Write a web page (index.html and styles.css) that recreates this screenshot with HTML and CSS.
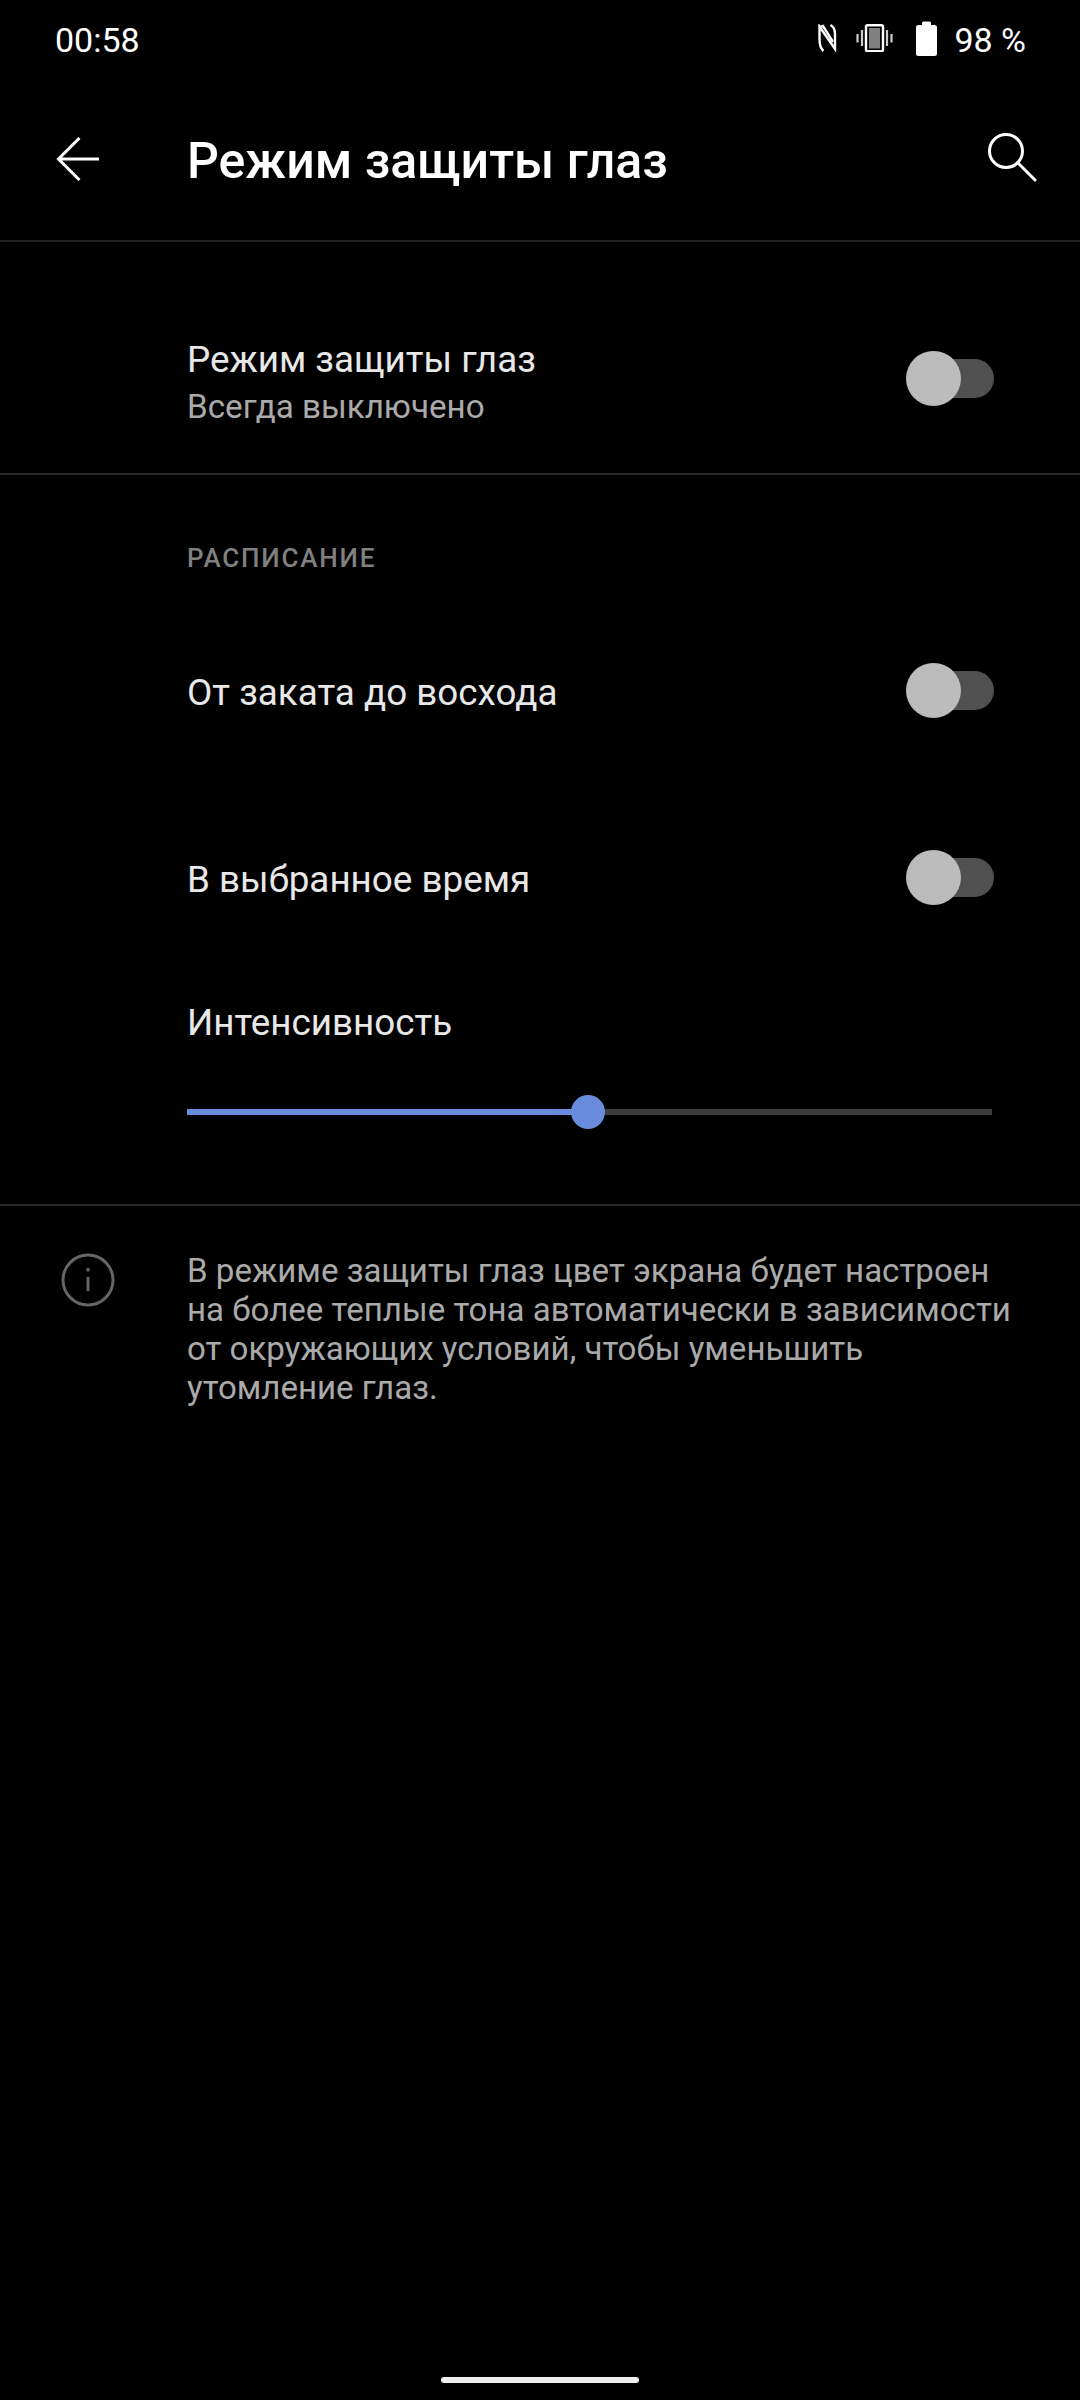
FILE: index.html
```html
<!DOCTYPE html>
<html lang="ru">
<head>
  <meta charset="UTF-8" />
  <meta name="viewport" content="width=device-width, initial-scale=1" />
  <title>Режим защиты глаз</title>
  <link rel="stylesheet" href="styles.css">
</head>
<body>
  <div class="screen">
    <div class="status-bar">
      <span class="time">00:58</span>
      <div class="status-icons">
        <svg class="icon-nfc" width="19" height="28" viewBox="0 0 19 28" fill="none" stroke="#fff" stroke-width="2.4">
          <path d="M5.500 27 C2 24 1.500 19 1.500 15 L1.500 2.500 L17 25 L17 10 C17 6 16 3 12.500 1"/>
          <path d="M2 3 L5 2 L15 18"/>
        </svg>
        <svg class="icon-vibrate" width="37" height="28" viewBox="0 0 37 28">
          <rect x="10" y="1.200" width="17" height="26" rx="1.500" fill="#000" stroke="#fff" stroke-width="2.400"/>
          <rect x="13" y="4" width="11" height="20.500" fill="#808080"/>
          <path d="M1.500 10 V18.500 M6 6 V22 M31 6 V22 M35.500 10 V18.500" stroke="#ccc" stroke-width="2.200"/>
        </svg>
        <svg class="icon-battery" width="21" height="35" viewBox="0 0 21 35">
          <path d="M6 2 Q6 0.500 7.500 0.500 H13.500 Q15 0.500 15 2 V4 H18.500 Q21 4 21 6.500 V32.500 Q21 35 18.500 35 H2.500 Q0 35 0 32.500 V6.500 Q0 4 2.500 4 H6 Z" fill="#fff"/>
        </svg>
        <span class="battery-text">98 %</span>
      </div>
    </div>

    <header class="toolbar">
      <svg class="back-icon" width="44" height="44" viewBox="0 0 44 44" fill="none" stroke="#fff" stroke-width="3">
        <path d="M23.500 1 L2.500 22 L23.500 43 M2.500 22 H43"/>
      </svg>
      <h1>Режим защиты глаз</h1>
      <svg class="search-icon" width="50" height="50" viewBox="0 0 50 50" fill="none" stroke="#fff" stroke-width="3">
        <circle cx="18" cy="18" r="16.500"/>
        <path d="M29.500 29.500 L47 47" stroke-linecap="round"/>
      </svg>
    </header>

    <section class="main-row">
      <div>
        <div class="row-title">Режим защиты глаз</div>
        <div class="row-sub">Всегда выключено</div>
      </div>
      <div class="switch main-switch"><div class="switch-thumb"></div></div>
    </section>

    <section class="schedule">
      <div class="section-label">РАСПИСАНИЕ</div>
      <div class="row sunset-row">
        <div class="row-title">От заката до восхода</div>
        <div class="switch"><div class="switch-thumb"></div></div>
      </div>
      <div class="row custom-row">
        <div class="row-title">В выбранное время</div>
        <div class="switch"><div class="switch-thumb"></div></div>
      </div>
      <div class="row-title intensity-title">Интенсивность</div>
      <div class="slider">
        <div class="slider-fill"></div>
        <div class="slider-thumb"></div>
      </div>
    </section>

    <section class="info">
      <svg class="info-icon" width="54" height="54" viewBox="0 0 54 54" fill="none" stroke="#666" stroke-width="3">
        <circle cx="27" cy="27" r="25"/>
        <path d="M27 24 V38"/>
        <path d="M27 15 V18.500"/>
      </svg>
      <p>В режиме защиты глаз цвет экрана будет настроен на более теплые тона автоматически в зависимости от окружающих условий, чтобы уменьшить утомление глаз.</p>
    </section>

    <div class="nav-handle"></div>
  </div>
</body>
</html>
```

FILE: styles.css
```css
body {
  margin: 0;
  background: #000;
  font-family: Roboto, 'Noto Sans', sans-serif;
  color: #eee;
}

.screen {
  width: 1080px;
  height: 2400px;
  display: flex;
  flex-direction: column;
  overflow: hidden;
}

.status-bar {
  height: 80px;
  display: flex;
  align-items: center;
  justify-content: space-between;
  padding: 0 54px 0 55px;
  color: #fff;
  font-size: 34px;
}

.status-icons {
  display: flex;
  align-items: center;
}

.status-icons svg {
  margin-bottom: 4px;
}

.icon-nfc {
  margin-right: 19px;
}

.icon-vibrate {
  margin-right: 23px;
}

.battery-text {
  margin-left: 17px;
}

.toolbar {
  height: 160px;
  display: flex;
  align-items: center;
  border-bottom: 2px solid #222;
  padding: 0 0 0 56px;
}

.toolbar h1 {
  margin: 2px 0 0 87px;
  font-size: 50px;
  font-weight: 500;
  color: #fff;
  flex: 1;
}

.back-icon {
  flex: none;
  margin-top: -2px;
}

.search-icon {
  margin-right: 42px;
  margin-top: -4px;
}

.main-row {
  height: 233px;
  box-sizing: border-box;
  display: flex;
  align-items: center;
  justify-content: space-between;
  border-bottom: 2px solid #2a2a2a;
  padding: 48px 86px 0 187px;
}

.main-switch {
  margin-bottom: 6px;
}

.row-title {
  font-size: 36.800px;
  color: #e8e8e8;
}

.row-sub {
  font-size: 33.200px;
  color: #aaa;
  margin-top: 6px;
}

.switch {
  width: 61px;
  height: 39px;
  background: #505050;
  border-radius: 20px;
  position: relative;
}

.switch-thumb {
  position: absolute;
  left: -27px;
  top: -8px;
  width: 55px;
  height: 55px;
  border-radius: 50%;
  background: #bbb;
}

.schedule {
  height: 731px;
  padding: 0 88px 0 187px;
  border-bottom: 2px solid #2a2a2a;
  box-sizing: border-box;
}

.section-label {
  margin-top: 68px;
  font-size: 26px;
  font-weight: 500;
  letter-spacing: 1.800px;
  color: #808080;
}

.row {
  display: flex;
  align-items: center;
  justify-content: space-between;
  height: 60px;
  margin-right: -2px;
}

.row .row-title {
  margin-top: 4px;
}

.sunset-row {
  margin-top: 87px;
}

.custom-row {
  margin-top: 127px;
}

.intensity-title {
  margin-top: 94px;
}

.slider {
  position: relative;
  height: 6px;
  margin-top: 65px;
  background: #3f3f3f;
}

.slider-fill {
  width: 401px;
  height: 6px;
  background: #6a8cdc;
}

.slider-thumb {
  position: absolute;
  left: 384px;
  top: -14px;
  width: 34px;
  height: 34px;
  border-radius: 50%;
  background: #6a8cdc;
}

.info {
  display: flex;
  padding: 45px 60px 0 61px;
}

.info-icon {
  flex: none;
  margin-top: 2px;
}

.info p {
  margin: 0 0 0 72px;
  font-size: 33.100px;
  line-height: 39px;
  color: #aaa;
}

.nav-handle {
  width: 198px;
  height: 6px;
  margin: auto auto 17px;
  border-radius: 3px;
  background: #eee;
}
```
